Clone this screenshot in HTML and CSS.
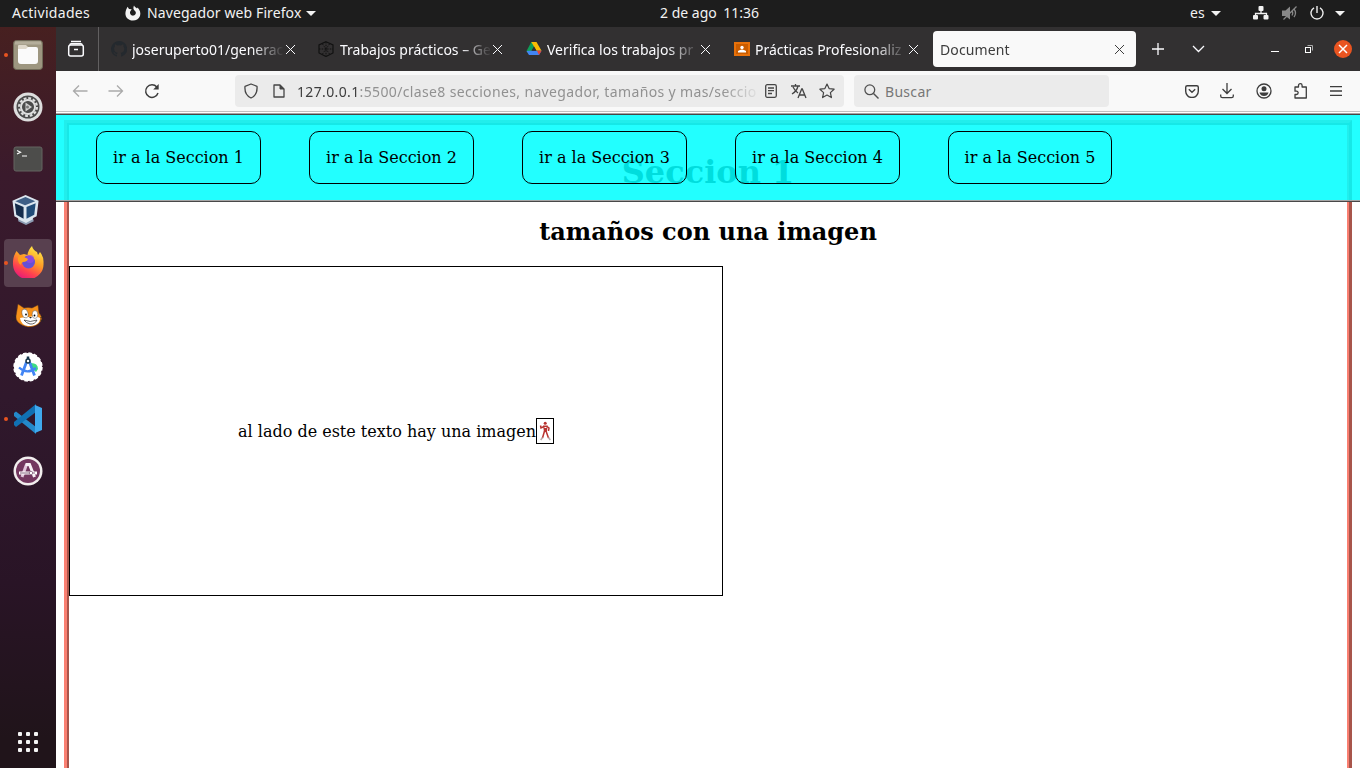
FILE: index.html
```html
<!DOCTYPE html>
<html lang="es">
<head>
<meta charset="utf-8">
<title>Document</title>
<link rel="stylesheet" href="styles.css">
</head>
<body>
<header class="topbar">
  <span class="activities">Actividades</span>
  <svg class="app-icon" width="16" height="16" viewBox="0 0 16 16"><path fill="#f2f2f2" d="M2.600 1.700 4 4l2.700.2L5.500 6C4 8 6 11 8.500 10.600c2.600-.5 3.200-3.500 1-5C8.300 4.500 8 2.500 9 .5c.7 1.800 2 2 3 3l.6-1C15 5 16 8 15 11c-1.200 3-4 4.600-7 4.600C3.500 15.500.3 12.500.4 8.300.5 5.500 1.500 3.500 2.600 1.700Z"/></svg>
  <span class="app-name">Navegador web Firefox</span>
  <span class="caret app-caret"></span>
  <span class="clock"><span class="date">2 de ago</span><span class="time">11:36</span></span>
  <span class="lang">es</span>
  <span class="caret lang-caret"></span>
  <svg class="net" width="16" height="14" viewBox="0 0 16 14"><path d="M8 4v4M2.500 10V7.500h11V10" fill="none" stroke="#f2f2f2" stroke-width="1.300"/><g fill="#f2f2f2"><rect x="5.500" y="0" width="5" height="5" rx="1"/><rect x="0" y="9" width="5" height="4.500" rx="1"/><rect x="10.500" y="9" width="5" height="4.500" rx="1"/></g></svg>
  <svg class="vol" width="16" height="14" viewBox="0 0 16 14"><path fill="#888" d="M0 4.500h3.500L8 .5v13L3.500 10H0Z"/><path d="M10 5q1.500 2 0 4.500M12 3q3 4 0 8M1.500 13.500 14.500.5" fill="none" stroke="#888" stroke-width="1.300"/></svg>
  <svg class="power" width="14" height="14" viewBox="0 0 14 14"><path d="M4 1.800a6 6 0 1 0 6 0M7 0v7" fill="none" stroke="#eee" stroke-width="1.400"/></svg>
  <span class="caret power-caret"></span>
</header>
<div class="desktop">
  <aside class="dock">
    <div class="dock-item running"><svg width="30" height="30" viewBox="0 0 30 30"><rect x=".5" y=".5" width="29" height="29" rx="3" fill="#9d9680" stroke="#706a58"/><rect x="2" y="1.500" width="26" height="3" fill="#b4ae9b"/><path fill="#dfd9cb" d="M5 6q0-1 1-1h7l2 2v4H5Z"/><path fill="#fafafa" d="M5 9h8l2-2h8q2 0 2 2v12q0 3-3 3H8q-3 0-3-3Z"/></svg></div>
    <div class="dock-item"><svg width="30" height="30" viewBox="0 0 30 30"><circle cx="15" cy="15" r="14.500" fill="#dedede"/><circle cx="15" cy="15" r="11.500" fill="#4b4b4b"/><circle cx="15" cy="15" r="8.900" fill="none" stroke="#dedede" stroke-width="2.200" stroke-dasharray="2.800 1.860"/><circle cx="15" cy="15" r="7" fill="none" stroke="#dedede" stroke-width="2"/><circle cx="15" cy="15" r="5.500" fill="#4b4b4b"/><path d="m12.500 10.500 6.500 4.500-6.500 4.500Z" fill="#d0d0d0"/><circle cx="14.500" cy="15" r="1.500" fill="#777"/></svg></div>
    <div class="dock-item"><svg width="30" height="30" viewBox="0 0 30 30"><rect x="1" y="3" width="28" height="24" rx="2" fill="#4d4d4b" stroke="#646461"/><path d="m4 6.500 3.500 1.800L4 10M9 12h5" fill="none" stroke="#fff" stroke-width="1.200"/></svg></div>
    <div class="dock-item"><svg class="vbox" width="28" height="31" viewBox="0 0 28 32"><path fill="#8d9db3" d="M6 24h15l1 4-8 4-8-4Z"/><path fill="#dce6ef" d="m6 24 8 3 7-3v2l-7 4-8-4ZM13.500 1 27 7l-2 16-12 6-11-6L0 7Z"/><path fill="#3e5f86" d="M13.500 3 23.500 7.500l-10.500 4L3 7.500Z"/><path fill="#142c4b" d="m2.500 9.500 9 4v12l-7.500-4Z"/><path fill="#214c78" d="m14.500 13.500 9.500-4L22.500 21.500l-8 4Z"/></svg></div>
    <div class="dock-item running active"><svg class="fox" width="32" height="32" viewBox="0 0 32 32"><defs><linearGradient id="ff" x1=".8" y1="0" x2=".3" y2="1"><stop offset="0" stop-color="#fff14a"/><stop offset=".45" stop-color="#ff9a25"/><stop offset=".75" stop-color="#ff414f"/><stop offset="1" stop-color="#e5197b"/></linearGradient></defs><path fill="url(#ff)" d="M4.500 5 8 9l4-1 3.500 1Q16 4 20 0q1 4 5 6l1 3 2-3q4 5 3.500 11A15 15 0 0 1 1 19C.7 13 2 9 4.500 5Z"/><circle cx="16.500" cy="16" r="6.500" fill="#6650d5"/><circle cx="18" cy="13" r="4" fill="#9b47df" opacity=".7"/><path fill="#ff9d20" d="M7 10q5 0 9 3-1 3-5 3-2 1-2.500 3Q4 14 7 10Z"/></svg></div>
    <div class="dock-item"><svg class="cat" width="32" height="28" viewBox="0 0 32 28"><path fill="#f79119" stroke="#5b341f" stroke-width=".5" d="m6 2 6 4q4-1 8 0l6-3 1 8q4 4 2 8-4 6-13 6Q3 22 4 14Z"/><path fill="#fff" d="M8 16q4-1 9-1 7-2 11 1 0 8-12 8-7-1-8-8Z"/><ellipse cx="13" cy="11.500" rx="3" ry="4.500" fill="#fff" stroke="#333" stroke-width=".4" transform="rotate(-15 13 11.500)"/><ellipse cx="23" cy="12.500" rx="2.800" ry="4" fill="#fff" stroke="#333" stroke-width=".4"/><circle cx="14" cy="12.500" r=".9"/><circle cx="22.500" cy="13.500" r=".9"/><path fill="#222" d="M17 15h3l-1.500 1.500Z"/><path d="M12 18q6 3 13 0-2 4.500-7 4-4-1-6-4ZM0 13l4 2m-4 4 4-2m24-1 4-2m-4 4 4 1" fill="none" stroke="#222" stroke-width=".7"/></svg></div>
    <div class="dock-item"><svg width="30" height="30" viewBox="0 0 30 30"><circle cx="15" cy="15" r="14" fill="#fff"/><circle cx="15" cy="15" r="13.700" fill="none" stroke="#fff" stroke-width="2" stroke-dasharray="3.500 1.880"/><path fill="#3ddc84" d="M18 11q7 0 7 6l-2 3-6-5Z"/><path d="m13.500 10-5 13.500m8-13.500 5 13.500" fill="none" stroke="#4285f4" stroke-width="2.800"/><path d="M6 15.500q8 7.500 17 .5" fill="none" stroke="#4285f4" stroke-width="2.300"/><path d="M15 4.500v3" stroke="#153449" stroke-width="2.500"/><circle cx="15" cy="9" r="2" fill="#fff" stroke="#153449" stroke-width="1.500"/></svg></div>
    <div class="dock-item running"><svg width="30" height="30" viewBox="0 0 30 30"><path fill="#2489ca" d="m1 9 2-1.500L23 23v7L1 12Z"/><path fill="#1070b3" d="m1 21 2 2L23 8V0L1 18Z"/><path fill="#3fa9ee" d="m22 1 7 3v22l-7 3Z"/></svg></div>
    <div class="dock-item"><svg width="30" height="30" viewBox="0 0 30 30"><circle cx="15" cy="15" r="14.500" fill="#f2eeee"/><circle cx="15" cy="15" r="12" fill="#73375f"/><path d="m9 21 4.500-12.500" fill="none" stroke="#e3c6dc" stroke-width="3"/><path d="M12.500 8.500h4l5 12.500" fill="none" stroke="#f7f0f5" stroke-width="3"/><path d="M6 17h18" stroke="#fff" stroke-width="3"/><path d="M7 17h15" stroke="#795370" stroke-width=".9"/><circle cx="18" cy="17" r="1.700" fill="#fff" stroke="#795370" stroke-width=".7"/></svg></div>
    <div class="apps"><i></i><i></i><i></i><i></i><i></i><i></i><i></i><i></i><i></i></div>
  </aside>
  <main class="browser">
    <div class="tabs">
      <div class="recent"><svg width="18" height="18" viewBox="0 0 18 18" fill="none" stroke="#fbfbfe" stroke-width="1.500"><path d="M4 1.500h10"/><rect x="1.700" y="5" width="14.600" height="11" rx="2"/><path d="M3 5q0-1.200 1-1.200h10q1 0 1 1.200M7 9.500h4"/></svg></div>
      <div class="tab"><svg class="fav" width="16" height="16" viewBox="0 0 16 16"><path fill="#24292e" d="M8 0a8 8 0 0 0-2.500 15.600c.4 0 .5-.2.500-.5v-1.500c-2 .4-2.600-.8-2.800-1.400-.4-.8-1.200-1-.5-1.200.8 0 1.300 1 1.600 1.300.6.900 1.400.7 2 .5 0-.5.200-.9.500-1.100-2-.2-3.700-1-3.700-4 0-.9.300-1.600.8-2.200 0-.6-.1-1.300.2-2 1 0 1.900.700 2.200.9a8 8 0 0 1 3.800 0c.3-.2 1.200-.9 2.200-.9.300.7.200 1.400.1 2 .6.600.9 1.300.9 2.200 0 3-1.800 3.800-3.700 4 .3.300.6.800.6 1.500v2c0 .3.100.5.500.4A8 8 0 0 0 8 0Z"/></svg><span class="tab-title t1">joseruperto01/generac</span><span class="close"></span></div>
      <div class="tab"><svg class="fav" width="16" height="16" viewBox="0 0 16 16" fill="none" stroke="#111" stroke-width="1"><path d="m8 .7 7 3.300v8l-7 3.500L1 12V4Z" stroke-width="1.200"/><path d="m4.500 3 7 10m0-10-7 10M1 8h14M8 1v14" stroke-dasharray="1.500 1.200"/></svg><span class="tab-title t2">Trabajos prácticos – Ge</span><span class="close"></span></div>
      <div class="tab"><svg class="fav" width="16" height="16" viewBox="0 0 16 16"><path fill="#0f9d58" d="M5.300 1H8l1 3-5.800 9.500L.5 10Z"/><path fill="#fbbc04" d="M5.300 1h5.200l5 8.800h-5Z"/><path fill="#4285f4" d="M3.500 9.800h12L13 14H3L.5 10Z"/><path fill="#ea4335" d="M11 9.800h4.500L13 14Z"/><path fill="#323031" d="m8 5.500 2.300 4.300H5.700Z"/></svg><span class="tab-title t3">Verifica los trabajos pr</span><span class="close"></span></div>
      <div class="tab"><svg class="fav" width="16" height="16" viewBox="0 0 16 16"><path fill="#e8710a" d="M0 1h16v14H0Z"/><path fill="#c95c00" d="M2 3h12v10H2Z"/><circle cx="8" cy="6.500" r="1.700" fill="#fff"/><path fill="#fff" d="M4 11.500V10q4-3 8 0v1.500Z"/></svg><span class="tab-title t4">Prácticas Profesionaliz</span><span class="close"></span></div>
      <div class="tab selected"><span class="tab-title t5">Document</span><span class="close"></span></div>
      <svg class="plus" width="12" height="12" viewBox="0 0 12 12"><path d="M6 0v12M0 6h12" stroke="#fbfbfe" stroke-width="1.300"/></svg>
      <svg class="chev" width="13" height="8" viewBox="0 0 13 8"><path d="m1 1 5.500 5.500L12 1" fill="none" stroke="#fbfbfe" stroke-width="1.300"/></svg>
      <span class="minimize"></span>
      <svg class="restore" width="8" height="8" viewBox="0 0 8 8" fill="none"><path d="M2.500.5h5v5" stroke="#aaa"/><rect x=".5" y="2.500" width="5" height="5" stroke="#fff"/></svg>
      <span class="window-close"><svg width="10" height="10" viewBox="0 0 10 10"><path d="m1 1 8 8M9 1 1 9" stroke="#fff" stroke-width="1.500"/></svg></span>
    </div>
    <div class="toolbar">
      <svg class="back" width="16" height="14" viewBox="0 0 16 14"><path d="M15.500 7H1.500M7 1.500 1.500 7 7 12.500" fill="none" stroke="#aaa" stroke-width="1.300"/></svg>
      <svg class="forward" width="16" height="14" viewBox="0 0 16 14"><path d="M.5 7h14M9 1.500 14.500 7 9 12.500" fill="none" stroke="#aaa" stroke-width="1.300"/></svg>
      <svg class="reload" width="16" height="16" viewBox="0 0 16 16"><path d="M12.800 4A6.300 6.300 0 1 0 14 10" fill="none" stroke="#3d3d3d" stroke-width="1.500"/><path fill="#3d3d3d" d="M14.700 1v5.500H9.200Z"/></svg>
      <div class="urlbar">
        <svg class="shield" width="16" height="16" viewBox="0 0 16 16"><path d="m8 1 6 2.300c.5 5.500-1.500 9.700-6 11.700C3.500 13 1.500 8.800 2 3.300Z" fill="none" stroke="#454545" stroke-width="1.300" stroke-linejoin="round"/></svg>
        <svg class="page" width="12" height="14" viewBox="0 0 12 14"><path d="M1 1h6l4 4v8H1Z" fill="none" stroke="#454545" stroke-width="1.300" stroke-linejoin="round"/><path d="M7 1v4h4Z" fill="#454545" stroke="#454545"/></svg>
        <span class="url"><b>127.0.0.1</b>:5500/clase8 secciones, navegador, tamaños y mas/seccio</span>
        <svg class="reader" width="12" height="14" viewBox="0 0 12 14" fill="none" stroke="#454545" stroke-width="1.300"><rect x=".7" y=".7" width="10.600" height="12.600" rx="1.500"/><path d="M3 4h6M3 6.700h6M3 9.500h4"/></svg>
        <svg class="translate" width="16" height="16" viewBox="0 0 16 16" fill="none" stroke="#454545" stroke-width="1.300"><path d="M0 3h9M4.500 1v2M1 11q5-3 6-8M2 4q2 4 5 6M7 15l3.700-9h.6L15 15M8.300 12h5.400"/></svg>
        <svg class="star" width="16" height="16" viewBox="0 0 16 16"><path d="m8 1 2.100 4.600 5 .6-3.700 3.400 1 5L8 12.100l-4.400 2.500 1-5L.9 6.200l5-.6Z" fill="none" stroke="#454545" stroke-width="1.200" stroke-linejoin="round"/></svg>
      </div>
      <div class="search"><svg width="15" height="15" viewBox="0 0 15 15"><path d="m9.500 9.500 5 5" stroke="#505050" stroke-width="1.400"/><circle cx="5.800" cy="5.800" r="4.900" fill="none" stroke="#505050" stroke-width="1.300"/></svg><span>Buscar</span></div>
      <div class="tools">
        <svg width="14" height="13" viewBox="0 0 14 13" fill="none" stroke="#3d3d3d" stroke-width="1.400"><path d="M2.200.7h9.600q1.500 0 1.500 1.500v4a6.300 6.300 0 0 1-12.600 0v-4Q.7.700 2.200.7ZM3.800 4.200 7 7.200l3.200-3"/></svg>
        <svg width="14" height="16" viewBox="0 0 14 16" fill="none" stroke="#3d3d3d" stroke-width="1.300"><path d="M7 0v10M2.500 6 7 10.500 11.500 6M.7 11.500v1.500q0 1.700 1.700 1.700h9.200q1.700 0 1.700-1.700v-1.500"/></svg>
        <svg width="16" height="16" viewBox="0 0 16 16"><circle cx="8" cy="8" r="7" fill="none" stroke="#3d3d3d" stroke-width="1.300"/><circle cx="8" cy="5.800" r="2.500" fill="#3d3d3d"/><path d="M3.500 9.500h9q-1 3.500-4.500 3.500T3.500 9.500Z" fill="#3d3d3d"/></svg>
        <svg width="16" height="16" viewBox="0 0 16 16"><path d="M5.500 4V2.500a1.800 1.800 0 0 1 3.600 0V4h4.200v11H2v-3.500h1.500a1.500 1.500 0 0 0 0-3.300H2V4Z" fill="none" stroke="#3d3d3d" stroke-width="1.300" stroke-linejoin="round"/></svg>
        <svg width="12" height="10" viewBox="0 0 12 10"><path d="M0 .7h12M0 5h12M0 9.300h12" stroke="#3d3d3d" stroke-width="1.300"/></svg>
      </div>
    </div>
    <div class="page-view">
      <nav class="nav"><a>ir a la Seccion 1</a><a>ir a la Seccion 2</a><a>ir a la Seccion 3</a><a>ir a la Seccion 4</a><a>ir a la Seccion 5</a></nav>
      <section class="section">
        <h1>Seccion 1</h1>
        <h2>tamaños con una imagen</h2>
        <div class="box"><span>al lado de este texto hay una imagen</span><span class="figure"><svg width="16" height="24" viewBox="0 0 16 24"><path d="M7 7.500 4 9 3.500 6.500M10 7.500 12 9l-.5 3M7.500 12 5.500 19M9 12l2.500 7" fill="none" stroke="#b8322e" stroke-width="1.500"/><circle cx="8.200" cy="4.300" r="1.500" fill="#b8322e"/><path fill="#b8322e" d="M6 6.500h4.800L9.800 13H7Z"/><path d="m5.500 18.500-1.800 2.500m7.800-2.500 1.800 2.500" stroke="#b7aaaa" stroke-width="1.600"/><path d="M7.500 8.500h2" stroke="#fff"/></svg></span></div>
      </section>
    </div>
  </main>
</div>
</body>
</html>
```
FILE: styles.css
```css
* { box-sizing: border-box; }
body { margin: 0; width: 1360px; height: 768px; overflow: hidden; font: 14px/18px "Noto Sans", "Open Sans", sans-serif; background: #fff; }
svg { display: block; flex: none; }
span { white-space: nowrap; }

/* Top panel */
.topbar { height: 27px; padding-bottom: 1px; background: #1d1d1d; color: #f2f2f2; display: flex; align-items: center; }
.activities { width: 79px; margin-left: 12px; letter-spacing: .3px; }
.app-icon { margin-left: 34px; }
.app-name { width: 155px; margin-left: 6px; letter-spacing: .1px; }
.caret { border: 5px solid transparent; border-top-color: #f2f2f2; border-bottom: 0; flex: none; }
.app-caret { margin-left: 4px; }
.clock { margin-left: 344px; width: 99px; display: flex; justify-content: space-between; }
.lang { margin-left: 431px; width: 14px; }
.lang-caret { margin-left: 7px; }
.net { margin-left: 32px; }
.vol { margin-left: 13px; }
.power { margin-left: 12px; }
.power-caret { margin-left: 11px; }

/* Launcher */
.desktop { display: flex; height: 741px; }
.dock { width: 56px; background: linear-gradient(#472020, #3a1a2c 20%, #30182c 50%, #291426 75%, #20141a 96%); display: flex; flex-direction: column; align-items: center; padding-top: 4px; gap: 4px; }
.dock-item { width: 48px; height: 48px; border-radius: 4px; display: flex; align-items: center; justify-content: center; position: relative; }
.dock-item.active { background: #58404f; }
.dock-item.running::before { content: ""; position: absolute; left: 0; top: 22px; width: 4px; height: 4px; border-radius: 2px; background: #e95420; }
.vbox { margin: 0 4px 3px 0; }
.fox { margin-bottom: 2px; }
.cat { margin-top: 2px; }
.apps { margin: auto 0 16px; display: grid; grid-template-columns: repeat(3, 4px); gap: 4px; }
.apps i { width: 4px; height: 4px; border-radius: 1px; background: #f4f4f4; }

/* Browser chrome */
.browser { width: 1304px; display: flex; flex-direction: column; }
.tabs { height: 44px; background: #323031; color: #fbfbfe; display: flex; align-items: center; }
.recent { width: 43px; height: 44px; border-right: 1px solid #626061; display: flex; align-items: center; padding-left: 11px; flex: none; }
.tab { width: 208px; height: 36px; display: flex; align-items: center; padding-left: 12px; flex: none; }
.tab + .tab { padding-left: 11px; }
.tab-title { margin: 1px 0 0 6px; width: 150px; overflow: hidden; -webkit-mask-image: linear-gradient(90deg, #000 120px, transparent 152px); mask-image: linear-gradient(90deg, #000 120px, transparent 152px); }
.t1 { margin-left: 5px; width: 151px; }
.t3, .t4 { margin-left: 5px; width: 151px; }
.t5 { letter-spacing: .1px; }
.close { width: 9px; height: 9px; flex: none; margin-left: 3px; background: linear-gradient(45deg, transparent 45%, currentColor 46% 54%, transparent 55%), linear-gradient(-45deg, transparent 45%, currentColor 46% 54%, transparent 55%); }
.tab.selected { width: 203px; margin-left: 2px; border-radius: 4px; background: #f9f9f9; color: #3d3d3d; padding-left: 7px; }
.selected .tab-title { margin-left: 0; width: 172px; }
.plus { margin-left: 16px; }
.chev { margin-left: 28px; }
.minimize { width: 8px; height: 1px; background: #fff; margin: 5px 0 0 66px; }
.restore { margin-left: 26px; }
.window-close { width: 18px; height: 18px; border-radius: 9px; background: #e95420; margin-left: 21px; display: flex; align-items: center; justify-content: center; }
.toolbar { height: 41px; background: #f9f9f9; border-bottom: 1px solid #c2c2c2; display: flex; align-items: center; }
.back { margin-left: 16px; }
.forward { margin-left: 20px; }
.reload { margin-left: 20px; }
.urlbar, .search { height: 32px; background: #ebebeb; border-radius: 4px; display: flex; align-items: center; flex: none; }
.urlbar { width: 609px; margin-left: 75px; padding-left: 8px; }
.page { margin-left: 14px; }
.url { margin: 1px 0 0 12px; width: 460px; overflow: hidden; color: #919191; letter-spacing: .36px; -webkit-mask-image: linear-gradient(90deg, #000 425px, transparent 464px); mask-image: linear-gradient(90deg, #000 425px, transparent 464px); }
.url b { font-weight: 400; color: #3d3d3d; }
.reader { margin-left: 8px; }
.translate { margin-left: 14px; }
.star { margin-left: 12px; }
.search { width: 255px; margin-left: 10px; padding-left: 10px; color: #777; }
.search span { margin: 1px 0 0 6px; letter-spacing: .3px; }
.tools { display: flex; align-items: center; justify-content: space-between; width: 157px; margin-left: 76px; }

/* Web page */
.page-view { flex: 1; padding: 8px 8px 0; position: relative; background: #fff; font: 16px/19px "DejaVu Serif", serif; color: #000; overflow: hidden; }
.nav { position: absolute; left: 0; right: 0; top: 1px; height: 89px; padding: 18px 40px; display: flex; gap: 48px; background: linear-gradient(#a5a5a5 0 1px, #484848 1px 2px, rgba(0, 255, 255, .867) 2px 87px, #a5a5a5 87px 88px, #484848 88px); z-index: 1; }
.nav a { width: 165px; height: 53px; border: 1px solid #000; border-radius: 10px; display: flex; align-items: center; justify-content: center; white-space: nowrap; flex: none; }
.nav a:last-child { width: 164px; }
.section { height: 1000px; padding: 2px 2px 0; border: 3px solid #fa8072; border-right-color: #a8554b; box-shadow: inset 2px 2px #a8554b, inset -2px 0 #fa8072; }
.section h1 { margin: 28px 0 0; font-size: 32px; line-height: 38px; text-align: center; }
.section h2 { margin: 27px 0 0; font-size: 24px; line-height: 28px; text-align: center; }
.box { width: 654px; height: 330px; margin-top: 20px; border: 1px solid #000; display: flex; align-items: center; justify-content: center; }
.figure { width: 18px; height: 26px; border: 1px solid #000; }
```
